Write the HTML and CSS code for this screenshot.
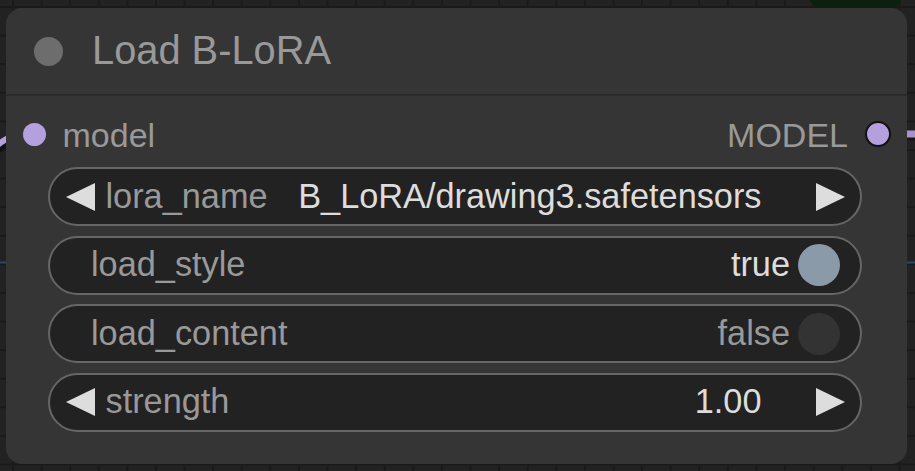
FILE: index.html
```html
<!DOCTYPE html>
<html>
<head>
<meta charset="utf-8">
<link rel="stylesheet" href="styles.css">
</head>
<body>
<div class="canvas">
  <svg class="wires" width="915" height="471" viewBox="0 0 915 471">
    <line x1="0" y1="262.5" x2="915" y2="262.5" stroke="#2b4470" stroke-width="2"/>
    <path d="M -30 175 C -5 150, 10 134, 34 134" fill="none" stroke="#111" stroke-width="9"/>
    <path d="M -30 170 C -5 146, 10 131, 34 131" fill="none" stroke="#b39ddb" stroke-width="6"/>
    <line x1="879" y1="138.5" x2="915" y2="138.5" stroke="#151515" stroke-width="4"/>
    <line x1="879" y1="134" x2="915" y2="134" stroke="#a793cc" stroke-width="7"/>
  </svg>
  <div class="other-node"></div>

  <div class="node">
    <div class="title">
      <span class="title-dot"></span>
      <span class="title-text">Load B-LoRA</span>
    </div>
    <div class="slots">
      <div class="slot">
        <span class="slot-dot"></span>
        <span class="slot-label">model</span>
      </div>
      <div class="slot">
        <span class="slot-label">MODEL</span>
        <span class="slot-dot out"></span>
      </div>
    </div>
    <div class="widgets">
      <div class="widget combo">
        <svg class="arrow" width="29" height="28" viewBox="0 0 29 28"><polygon points="0,14 29,0 29,28" fill="#ddd"/></svg>
        <span class="w-label">lora_name</span>
        <span class="w-value">B_LoRA/drawing3.safetensors</span>
        <svg class="arrow right" width="29" height="28" viewBox="0 0 29 28"><polygon points="29,14 0,0 0,28" fill="#ddd"/></svg>
      </div>
      <div class="widget toggle">
        <span class="w-label">load_style</span>
        <span class="w-value">true</span>
        <span class="knob on"></span>
      </div>
      <div class="widget toggle">
        <span class="w-label">load_content</span>
        <span class="w-value off">false</span>
        <span class="knob"></span>
      </div>
      <div class="widget combo">
        <svg class="arrow" width="29" height="28" viewBox="0 0 29 28"><polygon points="0,14 29,0 29,28" fill="#ddd"/></svg>
        <span class="w-label">strength</span>
        <span class="w-value">1.00</span>
        <svg class="arrow right" width="29" height="28" viewBox="0 0 29 28"><polygon points="29,14 0,0 0,28" fill="#ddd"/></svg>
      </div>
    </div>
  </div>
</div>
</body>
</html>
```
FILE: styles.css
```css
* { box-sizing: border-box; }
html, body {
  margin: 0;
  padding: 0;
  width: 915px;
  height: 471px;
  overflow: hidden;
}
body {
  font-family: "Liberation Sans", Arial, sans-serif;
}
.canvas {
  position: relative;
  width: 915px;
  height: 471px;
  background-color: #222;
  background-image:
    linear-gradient(to right, #1a1a1a 2px, transparent 2px),
    linear-gradient(to bottom, #1a1a1a 2px, transparent 2px);
  background-size: 28.6px 28.6px;
  background-position: 12px 6px;
  overflow: hidden;
}
.wires {
  position: absolute;
  left: 0;
  top: 0;
}
.other-node {
  position: absolute;
  left: 808px;
  top: -30px;
  width: 95px;
  height: 38px;
  background: #0d200f;
  border-radius: 14px;
}
.node {
  position: absolute;
  left: 6px;
  top: 8px;
  width: 901px;
  height: 456px;
  background: #353535;
  border-radius: 16px;
  display: flex;
  flex-direction: column;
}
.title {
  height: 88px;
  border-bottom: 2px solid #2a2a2a;
  display: flex;
  align-items: center;
  padding-left: 28px;
  gap: 29px;
}
.title-dot {
  width: 29px;
  height: 29px;
  border-radius: 50%;
  background: #6d6d6d;
  flex: none;
}
.title-text {
  font-size: 39.8px;
  color: #999;
  line-height: 1.15;
}
.slots {
  height: 71px;
  padding-top: 5px;
  display: flex;
  justify-content: space-between;
  align-items: center;
  padding-left: 16.5px;
  padding-right: 16px;
}
.slot {
  display: flex;
  align-items: center;
  gap: 17px;
}
.slot-label {
  font-size: 34px;
  color: #999;
  line-height: 1.15;
  padding-top: 4px;
}
.slot-dot {
  width: 23px;
  height: 23px;
  border-radius: 50%;
  background: #b4a0de;
  flex: none;
}
.slot-dot.out {
  width: 26px;
  height: 26px;
  border: 2.5px solid #111;
}
.widgets {
  display: flex;
  flex-direction: column;
  gap: 9.5px;
  padding: 0 45px 0 42px;
}
.widget {
  height: 59px;
  border: 2px solid #666;
  border-radius: 30px;
  background: #222;
  display: flex;
  align-items: center;
  font-size: 34.3px;
  line-height: 1.15;
}
.combo {
  padding: 0 15.5px;
}
.toggle {
  padding: 0 20px 0 41px;
}
.arrow {
  flex: none;
  display: block;
}
.arrow.right {
  margin-left: 54px;
}
.w-label {
  color: #999;
  flex: 1;
}
.combo .w-label {
  margin-left: 11px;
}
.w-value {
  color: #ddd;
  white-space: nowrap;
}
.w-value.off {
  color: #999;
}
.knob {
  width: 42px;
  height: 42px;
  border-radius: 50%;
  background: #333;
  margin-left: 8px;
  flex: none;
}
.knob.on {
  background: #8a9aa8;
}
```
